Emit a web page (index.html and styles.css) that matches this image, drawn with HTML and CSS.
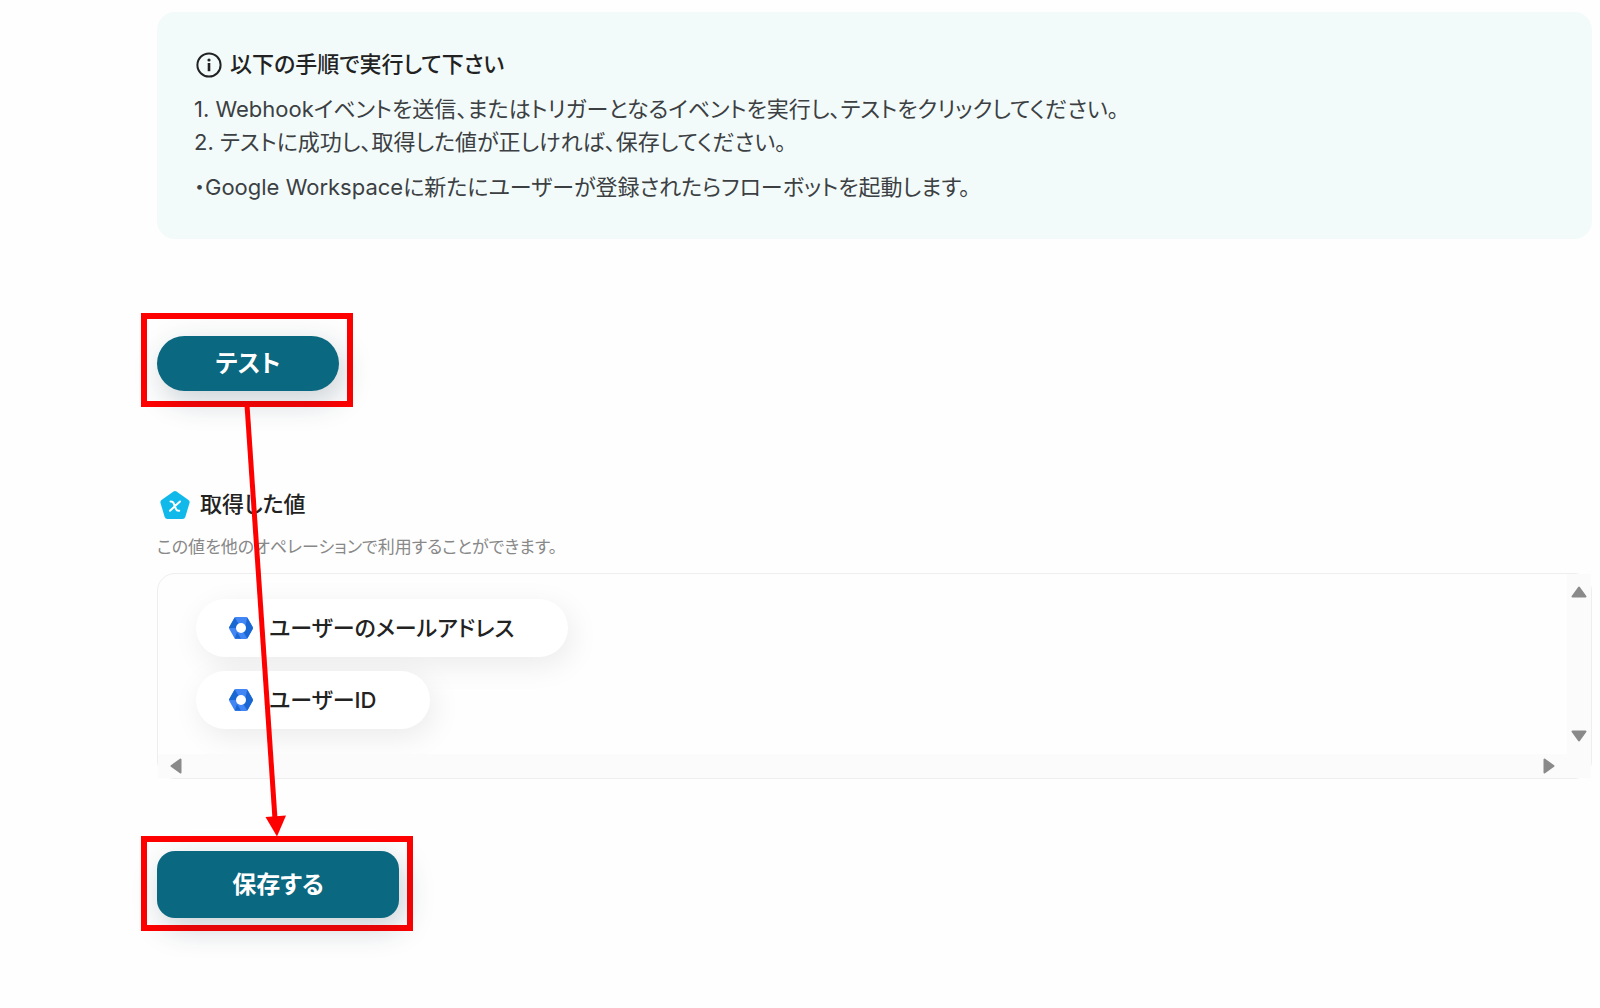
FILE: index.html
```html
<!DOCTYPE html>
<html lang="ja">
<head>
    <meta charset="UTF-8">
    <meta name="viewport" content="width=device-width, initial-scale=1.0">
    <title>テスト</title>
    <link rel="stylesheet" href="styles.css">
</head>
<body>
    <main class="container">
        <section class="info">
            <h2 class="info-title">
                <svg class="info-icon" viewBox="0 0 26 26" aria-hidden="true">
                    <circle cx="13" cy="13" r="11.6" fill="none" stroke="currentColor" stroke-width="2"/>
                    <rect x="11.7" y="11" width="2.6" height="8.2" fill="currentColor"/>
                    <circle cx="13" cy="8" r="1.6" fill="currentColor"/>
                </svg>
                以下の手順で実行して下さい
            </h2>
            <p>1. Webhookイベントを送信、またはトリガーとなるイベントを実行し、テストをクリックしてください。</p>
            <p>2. テストに成功し、取得した値が正しければ、保存してください。</p>
            <p class="info-note">・Google Workspaceに新たにユーザーが登録されたらフローボットを起動します。</p>
        </section>

        <div class="highlight highlight-test">
            <button type="button" class="button button-test">テスト</button>
            <svg class="arrow" viewBox="0 0 50 432" aria-hidden="true">
                <path d="M7 0L35 414" stroke="#ff0000" stroke-width="5" fill="none"/>
                <path d="M25.500 412L46 410.500L37 431.500Z" fill="#ff0000"/>
            </svg>
        </div>

        <section class="values">
            <h2 class="values-title">
                <svg class="values-icon" viewBox="0 0 30 30" aria-hidden="true">
                    <path d="M13.500 1.500Q15 .500 16.500 1.500L28.500 10Q30 11.200 29.500 13L25.300 27Q24.600 29 22.700 29H7.300Q5.400 29 4.700 27L.500 13Q0 11.200 1.500 10Z" fill="#10b9ea"/>
                    <path d="M10.500 11.500Q12.800 11.300 13.600 13.200L15.900 18.800Q16.700 20.900 19.200 20.700M20 11.500L10 20.700" fill="none" stroke="#fff" stroke-width="2" stroke-linecap="round"/>
                </svg>
                取得した値
            </h2>
            <p class="values-note">この値を他のオペレーションで利用することができます。</p>
            <div class="list">
                <ul class="chips">
                    <li class="chip">
                        <svg class="chip-icon" viewBox="0 0 24 22" aria-hidden="true">
                            <path d="M6.800 0H17.200Q18 0 18.500 .800L23.700 10Q24.200 11 23.700 12L18.500 21.200Q18 22 17.200 22H6.800Q6 22 5.500 21.200L.300 12Q-.200 11 .300 10L5.500 .800Q6 0 6.800 0Z" fill="#4285f4"/>
                            <path d="M5.800 .500L12 11H.100Q0 10.500 .300 10L5.500 .800ZM18.200 21.500L12 11H23.900Q24 11.500 23.700 12L18.500 21.200ZM18.200 .500L23.700 10L23.900 11H16ZM5.800 21.500H12L8 15Z" fill="#1967d2"/>
                            <circle cx="12" cy="11" r="5" fill="#fff"/>
                        </svg>
                        ユーザーのメールアドレス
                    </li>
                    <li class="chip">
                        <svg class="chip-icon" viewBox="0 0 24 22" aria-hidden="true">
                            <path d="M6.800 0H17.200Q18 0 18.500 .800L23.700 10Q24.200 11 23.700 12L18.500 21.200Q18 22 17.200 22H6.800Q6 22 5.500 21.200L.300 12Q-.200 11 .300 10L5.500 .800Q6 0 6.800 0Z" fill="#4285f4"/>
                            <path d="M5.800 .500L12 11H.100Q0 10.500 .300 10L5.500 .800ZM18.200 21.500L12 11H23.900Q24 11.500 23.700 12L18.500 21.200ZM18.200 .500L23.700 10L23.900 11H16ZM5.800 21.500H12L8 15Z" fill="#1967d2"/>
                            <circle cx="12" cy="11" r="5" fill="#fff"/>
                        </svg>
                        ユーザーID
                    </li>
                </ul>
                <div class="scroll scroll-y">
                    <svg class="scroll-arrow" viewBox="0 0 16 12"><path d="M8 1.500L14.500 10.500H1.500Z"/></svg>
                    <svg class="scroll-arrow" viewBox="0 0 16 12"><path d="M8 10.500L14.500 1.500H1.500Z"/></svg>
                </div>
                <div class="scroll scroll-x">
                    <svg class="scroll-arrow-x" viewBox="0 0 12 16"><path d="M1.500 8L10.500 1.500V14.500Z"/></svg>
                    <svg class="scroll-arrow-x" viewBox="0 0 12 16"><path d="M10.500 8L1.500 1.500V14.500Z"/></svg>
                </div>
                <div class="scroll"></div>
            </div>
        </section>

        <div class="highlight highlight-save">
            <button type="button" class="button button-save">保存する</button>
        </div>
    </main>
</body>
</html>
```
FILE: styles.css
```css
* {
    box-sizing: border-box;
}
body {
    margin: 0;
    background-color: #fefefe;
    color: #222;
    font-family: Inter, "Noto Sans CJK JP", sans-serif;
    font-feature-settings: "palt";
    font-size: 22px;
}
h2, p, ul {
    margin: 0;
    padding: 0;
}
.container {
    padding: 12px 8px 76px 157px;
}
.info {
    padding: 36px 37px 35px;
    background-color: #f2fbfa;
    border-radius: 18px;
    color: #3c4043;
    line-height: 33px;
}
.info-title, .values-title {
    display: flex;
    align-items: center;
    gap: 8px;
    color: #222;
    font-size: 22px;
    font-weight: 500;
    line-height: 33px;
}
.info-title {
    margin-bottom: 12px;
}
.info-icon {
    width: 26px;
    height: 26px;
    margin-left: 2px;
}
.info-note {
    margin-top: 12px;
}

/* red frame round the buttons */
.highlight {
    position: relative;
    width: fit-content;
    margin-left: -16px;
    border: 6px solid #ff0000;
}
.highlight-test {
    margin-top: 74px;
    padding: 17px 8px 10px 10px;
}
.highlight-save {
    margin-top: 57px;
    padding: 9px 8px 7px 10px;
}
.arrow {
    position: absolute;
    z-index: 1;
    top: 100%;
    left: 93px;
    width: 50px;
    height: 440px;
}
.button {
    display: block;
    padding: 0 0 4px;
    border: none;
    background-color: #0a6880;
    color: white;
    font-family: inherit;
    font-feature-settings: inherit;
    font-size: 24px;
    font-weight: 700;
    box-shadow: 5px 10px 30px rgba(20,50,70,0.22);
    cursor: pointer;
}
.button-test {
    width: 182px;
    height: 55px;
    border-radius: 28px;
}
.button-save {
    width: 242px;
    height: 67px;
    border-radius: 18px;
}

.values {
    margin-top: 81px;
}
.values-title {
    padding-left: 3px;
    gap: 10px;
}
.values-icon {
    width: 30px;
    height: 30px;
}
.values-note {
    margin: 13px 0;
    color: #888;
    font-size: 17px;
    line-height: 26px;
}
.list {
    display: grid;
    grid-template-columns: 1fr 24px;
    grid-template-rows: auto 24px;
    border: 1px solid #eee;
    border-radius: 18px;
}
.chips {
    display: flex;
    flex-direction: column;
    align-items: flex-start;
    gap: 14px;
    padding: 25px 38px;
    list-style: none;
}
.chip {
    display: flex;
    align-items: center;
    gap: 16px;
    height: 58px;
    padding: 0 54px 0 33px;
    border-radius: 29px;
    background-color: white;
    box-shadow: 4px 8px 30px rgba(0,0,0,0.08);
    color: #222;
    font-weight: 500;
    line-height: 32px;
}
.chip-icon {
    width: 24px;
    height: 22px;
}
.scroll {
    display: flex;
    align-items: center;
    justify-content: space-between;
    background-color: #fbfbfb;
}
.scroll-y {
    flex-direction: column;
    padding: 12px 0;
}
.scroll-x {
    padding: 0 12px;
}
.scroll-arrow {
    width: 16px;
    height: 12px;
}
.scroll-arrow-x {
    width: 12px;
    height: 16px;
}
.scroll path {
    fill: #8a8a8a;
    stroke: #8a8a8a;
    stroke-width: 2px;
    stroke-linejoin: round;
}
```
